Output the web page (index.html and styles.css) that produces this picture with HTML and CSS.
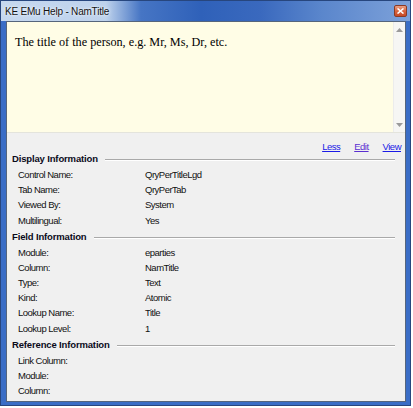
FILE: index.html
```html
<!DOCTYPE html>
<html>
<head>
<meta charset="utf-8">
<link rel="stylesheet" href="styles.css">
</head>
<body>
<div class="window">
  <div class="titlebar">
    <span class="title">KE EMu Help - NamTitle</span>
    <span class="close"><svg width="7" height="6" viewBox="0 0 7 6"><path d="M0.5 0.5 L6.5 5.5 M6.5 0.5 L0.5 5.5" stroke="#fff" stroke-width="1.6" fill="none"/></svg></span>
  </div>
  <div class="frame">
    <div class="client">
      <div class="help">
        <div class="help-text">The title of the person, e.g. Mr, Ms, Dr, etc.</div>
        <div class="scrollbar">
          <svg class="arrow" width="7" height="4" viewBox="0 0 7 4"><path d="M0 4 L3.5 0 L7 4 Z" fill="#9a9a9a"/></svg>
          <svg class="arrow" width="7" height="4" viewBox="0 0 7 4"><path d="M0 0 L3.5 4 L7 0 Z" fill="#9a9a9a"/></svg>
        </div>
      </div>
      <div class="details">
        <div class="links">
          <a class="link" href="#">Less</a>
          <a class="link visited" href="#">Edit</a>
          <a class="link" href="#">View</a>
        </div>
        <div class="group">
          <div class="group-head"><span class="group-title">Display Information</span><span class="rule"></span></div>
          <div class="row"><span class="label">Control Name:</span><span class="value">QryPerTitleLgd</span></div>
          <div class="row"><span class="label">Tab Name:</span><span class="value">QryPerTab</span></div>
          <div class="row"><span class="label">Viewed By:</span><span class="value">System</span></div>
          <div class="row"><span class="label">Multilingual:</span><span class="value">Yes</span></div>
        </div>
        <div class="group">
          <div class="group-head"><span class="group-title">Field Information</span><span class="rule"></span></div>
          <div class="row"><span class="label">Module:</span><span class="value">eparties</span></div>
          <div class="row"><span class="label">Column:</span><span class="value">NamTitle</span></div>
          <div class="row"><span class="label">Type:</span><span class="value">Text</span></div>
          <div class="row"><span class="label">Kind:</span><span class="value">Atomic</span></div>
          <div class="row"><span class="label">Lookup Name:</span><span class="value">Title</span></div>
          <div class="row"><span class="label">Lookup Level:</span><span class="value">1</span></div>
        </div>
        <div class="group">
          <div class="group-head"><span class="group-title">Reference Information</span><span class="rule"></span></div>
          <div class="row"><span class="label">Link Column:</span><span class="value"></span></div>
          <div class="row"><span class="label">Module:</span><span class="value"></span></div>
          <div class="row"><span class="label">Column:</span><span class="value"></span></div>
        </div>
      </div>
    </div>
  </div>
</div>
</body>
</html>
```

FILE: styles.css
```css
html, body {
  margin: 0;
  padding: 0;
  background: #ffffff;
}

.window {
  width: 411px;
  height: 406px;
  box-sizing: border-box;
  border: 1px solid #27467e;
  background: #3a6dc6;
  display: flex;
  flex-direction: column;
  font-family: "Liberation Sans", Arial, sans-serif;
}

.titlebar {
  height: 20px;
  flex: none;
  display: flex;
  align-items: center;
  justify-content: space-between;
  padding: 0 3px 0 4px;
  background: linear-gradient(90deg, #c6d8ef 0px, #bed2ec 105px, #4675c4 140px, #2f61b9 200px, #3a69be 260px, #5a86cc 320px, #7ea2da 411px);
}

.title {
  font-size: 10px;
  letter-spacing: -0.2px;
  color: #111;
  text-shadow: 0 0 4px #e8f0fa, 0 0 2px #ffffff;
}

.close {
  width: 13px;
  height: 12px;
  box-sizing: border-box;
  border: 1px solid #8a3a25;
  border-radius: 2px;
  background: linear-gradient(180deg, #e9a186 0%, #d8653f 50%, #c84a26 100%);
  display: flex;
  align-items: center;
  justify-content: center;
}

.frame {
  flex: 1;
  padding: 0 4px 3px 5px;
  display: flex;
}

.client {
  flex: 1;
  border: 1px solid #55657c;
  background: #f0f0f0;
  display: flex;
  flex-direction: column;
}

.help {
  height: 110px;
  flex: none;
  display: flex;
  background: #fffde6;
  border-bottom: 1px solid #e4e4dc;
}

.help-text {
  flex: 1;
  padding: 13px 0 0 8px;
  font-family: "Liberation Serif", "Times New Roman", serif;
  font-size: 12.2px;
  line-height: 14px;
  color: #000;
}

.scrollbar {
  width: 12px;
  flex: none;
  background: #f6f6f4;
  border-left: 1px solid #ececec;
  display: flex;
  flex-direction: column;
  justify-content: space-between;
  align-items: center;
  padding: 6px 0 5px;
  box-sizing: border-box;
}

.arrow {
  display: block;
}

.details {
  flex: 1;
  padding: 8px 4px 0 5px;
  font-size: 9.5px;
  color: #111;
}

.links {
  height: 12px;
  line-height: 12px;
  display: flex;
  justify-content: flex-end;
  gap: 14px;
}

.link {
  color: #1a1ae6;
  text-decoration: underline;
  letter-spacing: -0.5px;
}

.link.visited {
  color: #5a2fd0;
}

.group + .group {
  margin-top: 2.9px;
}

.group-head {
  height: 14px;
  line-height: 12px;
  display: flex;
  align-items: flex-start;
  gap: 7px;
}

.group-title {
  font-weight: bold;
  letter-spacing: -0.15px;
  color: #0a0a1a;
  white-space: nowrap;
}

.rule {
  flex: 1;
  margin-top: 6px;
  margin-right: 6px;
  border-top: 1px solid #a9a9a9;
  border-bottom: 1px solid #ffffff;
}

.row {
  height: 15.2px;
  line-height: 15.2px;
  display: flex;
  padding-left: 6px;
  letter-spacing: -0.5px;
}

.label {
  width: 127px;
  flex: none;
}

.value {
  flex: 1;
}
```
